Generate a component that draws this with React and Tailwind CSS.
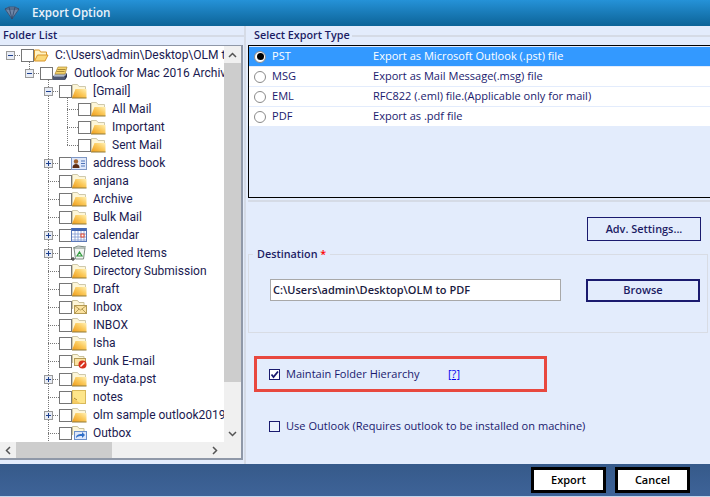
const FONT = "font-['Open_Sans',sans-serif]";

function Toggle({ open }) {
  return (
    <span className="relative flex h-[9px] w-[9px] items-center justify-center border border-[#9a9a9a] bg-[#e8ecf4]">
      <span className="absolute h-px w-[5px] bg-[#1c3f8f]" />
      {!open && <span className="absolute h-[5px] w-px bg-[#1c3f8f]" />}
    </span>
  );
}

function FolderIcon() {
  return (
    <svg width="16" height="16" viewBox="0 0 16 16">
      <defs>
        <linearGradient id="fold" x1="0" y1="1" x2="1" y2="0">
          <stop offset="0" stopColor="#ee9a18" />
          <stop offset="0.55" stopColor="#fbc95a" />
          <stop offset="1" stopColor="#fff0b4" />
        </linearGradient>
      </defs>
      <path d="M1.500 14V1.500h5l1.500 2h6.500V7" fill="#fdf6d8" stroke="#cfc9ac" />
      <path d="M1 15l3.500-9H15.500v9z" fill="url(#fold)" />
      <path d="M1 15h14.500" stroke="#8f7a3a" />
    </svg>
  );
}

function MailFolder({ children }) {
  return (
    <svg width="16" height="16" viewBox="0 0 16 16">
      <path d="M1.500 10V1.500h5l1.500 2h5V6" fill="#fdf6d8" stroke="#c9c19a" />
      {children}
    </svg>
  );
}

function Icon({ type }) {
  if (type === "open")
    return (
      <svg width="16" height="16" viewBox="0 0 16 16">
        <path d="M1.500 14V3h5l1 2h6v3" fill="#fff3c4" stroke="#d9962a" />
        <path d="M1.500 14l3-6h10.500l-3 6z" fill="#fbd878" stroke="#d9962a" />
      </svg>
    );
  if (type === "archive")
    return (
      <svg width="16" height="16" viewBox="0 0 16 16">
        <path d="M1 11l3-3h11l-2 3z" fill="#9aa6bc" />
        <path d="M1 11h12v4H1z" fill="#4e5872" />
        <path d="M2 11h10" stroke="#c7cfdd" />
        <path d="M13 11l2-3v4l-2 3z" fill="#2e3650" />
        <path d="M3 9l3-7h9l-2 7z" fill="#f3d36e" stroke="#b08a2e" strokeWidth=".7" />
        <path d="M5.500 4.500h8M4.500 6.500h8" stroke="#8a6a1e" strokeWidth=".7" />
      </svg>
    );
  if (type === "contacts")
    return (
      <svg width="16" height="16" viewBox="0 0 16 16">
        <rect x=".5" y="2.5" width="15" height="12" fill="#dfe8fa" stroke="#7f97c4" />
        <circle cx="5" cy="6.500" r="2.200" fill="#a0602a" />
        <path d="M1.500 13c0-3 1.500-4 3.500-4s3.500 1 3.500 4z" fill="#5a2c14" />
        <path d="M10 6h4M10 8.500h4M10 11h4" stroke="#4f74b8" />
      </svg>
    );
  if (type === "calendar")
    return (
      <svg width="16" height="16" viewBox="0 0 16 16">
        <rect x=".5" y="1.500" width="15" height="13" fill="#fff" stroke="#5a78b8" />
        <rect x="1" y="1" width="14" height="3" fill="#4468b4" />
        <path d="M1 7h14M1 10h14M1 13h14M4 4v10M7 4v10M10 4v10M13 4v10" stroke="#7f97d0" strokeWidth=".8" />
        <rect x="10" y="7" width="3" height="3" fill="#fff" stroke="#e2452b" />
      </svg>
    );
  if (type === "trash")
    return (
      <svg width="16" height="16" viewBox="0 0 16 16">
        <path d="M3 3h11l-1.500 11h-8z" fill="#f1f4f1" stroke="#7c8a80" />
        <path d="M2 3l5-2 8 1" fill="none" stroke="#7c8a80" />
        <path d="M8.500 7l2.500 4H6z" fill="none" stroke="#2f9a3c" strokeWidth="1.200" />
        <path d="M0 14h4M2 12v4" stroke="#222" />
      </svg>
    );
  if (type === "inbox")
    return (
      <MailFolder>
        <rect x="3.500" y="6.500" width="12" height="8" fill="#fbe2a0" stroke="#b49a55" />
        <path d="M3.500 6.500l6 4.500 6-4.500M3.500 14.500l4.500-4.500M15.500 14.500L11 10" fill="none" stroke="#b49a55" />
      </MailFolder>
    );
  if (type === "junk")
    return (
      <MailFolder>
        <rect x="3.500" y="5.500" width="11" height="7" fill="#fbe2a0" stroke="#b49a55" />
        <circle cx="11.500" cy="11.500" r="4" fill="#d8301c" />
        <path d="M9.500 13.500l4-4" stroke="#fff" strokeWidth="1.400" />
      </MailFolder>
    );
  if (type === "notes")
    return (
      <svg width="16" height="16" viewBox="0 0 16 16">
        <rect x="1.500" y="1.500" width="13" height="13" fill="#fde58a" stroke="#d8b85a" />
        <path d="M2 9.500l8 5H2z" fill="#f6cb62" />
        <path d="M3 9l3 2" stroke="#b08a2e" />
      </svg>
    );
  if (type === "outbox")
    return (
      <MailFolder>
        <rect x="3.500" y="6.500" width="12" height="8" fill="#dfe8fa" stroke="#6a8fca" />
        <path d="M5 13c0-3 2-4 6-4V7l3 3-3 3v-2c-2 0-4 0-6 2z" fill="#2f6fc8" />
      </MailFolder>
    );
  return <FolderIcon />;
}

const rows = [
  { d: 0, t: "open", label: "C:\\Users\\admin\\Desktop\\OLM to PDF", toggle: "open" },
  { d: 1, t: "archive", label: "Outlook for Mac 2016 Archive.olm", toggle: "open" },
  { d: 2, label: "[Gmail]", toggle: "open" },
  { d: 3, label: "All Mail" },
  { d: 3, label: "Important" },
  { d: 3, label: "Sent Mail" },
  { d: 2, t: "contacts", label: "address book", toggle: "closed" },
  { d: 2, label: "anjana" },
  { d: 2, label: "Archive" },
  { d: 2, label: "Bulk Mail" },
  { d: 2, t: "calendar", label: "calendar", toggle: "closed" },
  { d: 2, t: "trash", label: "Deleted Items", toggle: "closed" },
  { d: 2, label: "Directory Submission" },
  { d: 2, label: "Draft" },
  { d: 2, t: "inbox", label: "Inbox" },
  { d: 2, label: "INBOX" },
  { d: 2, label: "Isha" },
  { d: 2, t: "junk", label: "Junk E-mail" },
  { d: 2, label: "my-data.pst", toggle: "closed" },
  { d: 2, t: "notes", label: "notes" },
  { d: 2, label: "olm sample outlook2019", toggle: "closed" },
  { d: 2, t: "outbox", label: "Outbox" },
];

function TreeLines() {
  const dot = { stroke: "#777", strokeDasharray: "1 1" };
  return (
    <svg className="absolute left-0 top-0" width="224" height="398">
      <path d="M15 9.500H21" {...dot} />
      <path d="M34 27.500H40" {...dot} />
      <path d="M29.500 12V23" {...dot} />
      <path d="M48.500 30V398" {...dot} />
      <path d="M67.500 48V99" {...dot} />
      {[2, 6, 10, 11, 18, 20].map((i) => (
        <path key={i} d={`M53 ${i * 18 + 9.5}H59`} {...dot} />
      ))}
      {[3, 4, 5].map((i) => (
        <path key={i} d={`M67 ${i * 18 + 9.5}H78`} {...dot} />
      ))}
      {[7, 8, 9, 12, 13, 14, 15, 16, 17, 19, 21].map((i) => (
        <path key={i} d={`M48 ${i * 18 + 9.5}H59`} {...dot} />
      ))}
    </svg>
  );
}

function TreeRow({ row }) {
  return (
    <div className="flex h-[18px] items-center" style={{ paddingLeft: 6 + row.d * 19 }}>
      <span className="z-10 flex w-[15px] shrink-0 items-center">
        {row.toggle && <Toggle open={row.toggle === "open"} />}
      </span>
      <span className="z-10 h-[13px] w-[13px] shrink-0 border border-[#767676] bg-white" />
      <span className="z-10 -ml-px w-[16px] shrink-0"><Icon type={row.t} /></span>
      <span className="ml-[6px] whitespace-nowrap font-['Roboto',sans-serif] text-[12px] text-[#1a1a50]">{row.label}</span>
    </div>
  );
}

function Radio({ on }) {
  return (
    <span className="flex h-[12px] w-[12px] items-center justify-center rounded-full border border-[#8a8a8a] bg-white">
      {on && <span className="h-[7px] w-[7px] rounded-full bg-black" />}
    </span>
  );
}

const types = [
  { name: "PST", desc: "Export as Microsoft Outlook (.pst) file", on: true },
  { name: "MSG", desc: "Export as Mail Message(.msg) file" },
  { name: "EML", desc: "RFC822 (.eml) file.(Applicable only for mail)" },
  { name: "PDF", desc: "Export as .pdf file" },
];

export default function App() {
  return (
    <div className={`flex h-[497px] w-[710px] flex-col overflow-hidden bg-[#e3ecfc] text-[#1a1a6e] ${FONT}`}>
      {/* title bar */}
      <div className="flex h-[26px] shrink-0 items-center bg-gradient-to-b from-[#2592d8] to-[#0c6498] pl-[4px]">
        <svg width="16" height="14" viewBox="0 0 16 14">
          <path d="M1 3l4-2h6l4 2-7 10z" fill="#6f87a8" stroke="#3f5678" />
          <path d="M5 1l3 12 3-12M1 3h14" stroke="#2f4668" fill="none" strokeWidth=".8" />
        </svg>
        <span className="ml-[12px] text-[11.6px] font-semibold text-[#eaf3fb]">Export Option</span>
      </div>

      <div className="flex min-h-0 flex-1">
        {/* left panel */}
        <div className="flex w-[246px] shrink-0 flex-col border-r-2 border-[#d5dbe6]">
          <div className="flex h-[19px] items-center pl-[3px]">
            <span className="text-[10.8px] font-semibold text-[#1c1c64]">Folder List</span>
            <span className="ml-[2px] h-[2px] flex-1 bg-[#d5dbe6]" />
          </div>
          <div className="mr-[1px] flex h-[415px] flex-col border-r-2 border-b-2 border-t border-[#8f98a8] bg-[#efefef]">
            <div className="flex min-h-0 flex-1">
              <div className="relative flex-1 overflow-hidden bg-white">
                <TreeLines />
                {rows.map((r) => (
                  <TreeRow key={r.label} row={r} />
                ))}
              </div>
              <div className="flex w-[17px] shrink-0 flex-col bg-[#f0f0f0]">
                <span className="flex h-[17px] items-center justify-center">
                  <svg width="9" height="6" viewBox="0 0 9 6"><path d="M1 5l3.500-3.500L8 5" fill="none" stroke="#555" strokeWidth="1.500" /></svg>
                </span>
                <span className="h-[319px] bg-[#cdcdcd]" />
                <span className="flex-1" />
                <span className="flex h-[17px] items-center justify-center">
                  <svg width="9" height="6" viewBox="0 0 9 6"><path d="M1 1l3.500 3.500L8 1" fill="none" stroke="#555" strokeWidth="1.500" /></svg>
                </span>
              </div>
            </div>
            <div className="flex h-[16px] shrink-0 items-center bg-[#f0f0f0]">
              <span className="flex w-[16px] justify-center">
                <svg width="6" height="9" viewBox="0 0 6 9"><path d="M5 1L1.500 4.500 5 8" fill="none" stroke="#555" strokeWidth="1.500" /></svg>
              </span>
              <span className="h-full w-[96px] bg-[#cdcdcd]" />
              <span className="flex-1" />
              <span className="mr-[18px] flex w-[16px] justify-center">
                <svg width="6" height="9" viewBox="0 0 6 9"><path d="M1 1l3.500 3.500L1 8" fill="none" stroke="#555" strokeWidth="1.500" /></svg>
              </span>
            </div>
          </div>
        </div>

        {/* right panel */}
        <div className="flex min-w-0 flex-1 flex-col pl-[2px]">
          <div className="flex h-[19px] items-center pl-[6px]">
            <span className="text-[10.8px] font-semibold text-[#1c1c64]">Select Export Type</span>
            <span className="ml-[2px] h-[2px] flex-1 bg-[#d5dbe6]" />
          </div>
          <div className="h-[153px] border-t border-l border-b border-black pt-px">
            {types.map((t) => (
              <div
                key={t.name}
                className={`mb-px flex h-[19px] items-center text-[11.05px] ${t.on ? "bg-[#3399ff] text-white" : "bg-white text-[#1a1a6e]"}`}
              >
                <span className="ml-[5px] w-[18px]"><Radio on={t.on} /></span>
                <span className="w-[101px]">{t.name}</span>
                <span>{t.desc}</span>
              </div>
            ))}
          </div>
          <div className="h-[4px] border-b-2 border-[#d5dbe6]" />

          <div className="mt-[15px] flex justify-end pr-[9px]">
            <button className="h-[24px] w-[114px] border border-[#1a1a6e] text-[10.9px] font-semibold text-[#1c1c64]">Adv. Settings...</button>
          </div>

          <div className="relative mt-[13px] mr-[2px] flex h-[79px] items-start border border-[#d8dce4] pl-[21px] pt-[24px]">
            <span className="absolute -top-[9px] left-[4px] bg-[#e3ecfc] px-[4px] text-[10.8px] font-semibold text-[#1c1c64]">
              Destination <span className="text-[#ff0000]">*</span>
            </span>
            <div className="flex h-[22px] w-[291px] items-center border border-[#a8a8a8] bg-white pl-[2px] text-[11px] font-semibold text-[#1a1a40]">
              C:\Users\admin\Desktop\OLM to PDF
            </div>
            <button className="ml-[25px] h-[23px] w-[114px] border-2 border-[#1a1a6e] text-[11px] font-semibold text-[#1c1c64]">Browse</button>
          </div>

          <div className="mt-[23px] ml-[6px] flex h-[36px] w-[293px] items-center border-[3px] border-[#e8483f] pl-[12px] text-[11.05px]">
            <span className="flex h-[11px] w-[11px] items-center justify-center border border-[#1a1a6e] bg-white">
              <svg width="9" height="9" viewBox="0 0 9 9"><path d="M1.500 4.500L3.500 7 8 1.500" fill="none" stroke="#1a1a6e" strokeWidth="1.800" /></svg>
            </span>
            <span className="ml-[6px] w-[162px]">Maintain Folder Hierarchy</span>
            <span className="text-[#0000ee] underline">[?]</span>
          </div>

          <div className="mt-[26px] ml-[21px] flex items-center text-[11.05px]">
            <span className="h-[11px] w-[11px] border border-[#1a1a6e] bg-white/30" />
            <span className="ml-[6px]">Use Outlook (Requires outlook to be installed on machine)</span>
          </div>
        </div>
      </div>

      {/* footer */}
      <div className="flex h-[33px] shrink-0 items-start justify-end gap-[9px] border-b border-[#c5d6ec] bg-gradient-to-b from-[#365a8a] to-[#3e6398] pr-[20px] pt-[3px]">
        <button className="h-[26px] w-[75px] border-[3px] border-black bg-white text-[11px] font-semibold text-black">Export</button>
        <button className="h-[26px] w-[75px] border-[3px] border-black bg-white text-[11px] font-semibold text-black">Cancel</button>
      </div>
    </div>
  );
}
